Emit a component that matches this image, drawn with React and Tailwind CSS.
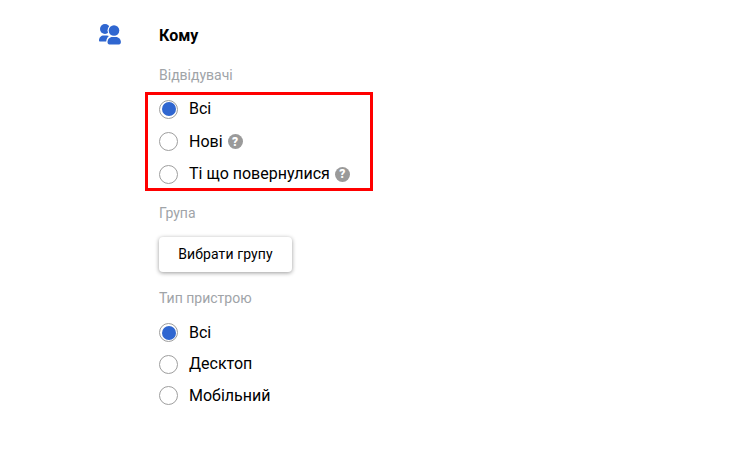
const visitors = [
  { label: "Всі", checked: true },
  { label: "Нові", help: true },
  { label: "Ті що повернулися", help: true },
];

const devices = [
  { label: "Всі", checked: true },
  { label: "Десктоп" },
  { label: "Мобільний" },
];

function HelpIcon() {
  return (
    <span className="ml-[5px] flex h-[15px] w-[15px] items-center justify-center rounded-full bg-[#9a9a9a] text-[12px] leading-none font-black text-white">
      ?
    </span>
  );
}

function Radio({ label, checked, help }) {
  return (
    <div className="flex h-[32px] items-center">
      <span className="flex h-[19px] w-[19px] items-center justify-center rounded-full border border-[#9e9e9e] bg-white">
        {checked && <span className="h-[14px] w-[14px] rounded-full bg-[#2f66d0]" />}
      </span>
      <span className="ml-[11px] text-[16px] text-black">{label}</span>
      {help && <HelpIcon />}
    </div>
  );
}

function UsersIcon() {
  return (
    <svg width="22" height="21" viewBox="0 0 22 21" fill="#2f66d0">
      <circle cx="6" cy="5" r="5" />
      <path d="M0 16.500C0 13.500 2 11.500 4.800 11.500h3c.8 0 1.500.2 2.100.5C8.500 13.300 7.500 15 7.200 17.500H1c-.6 0-1-.4-1-1z" />
      <circle cx="15" cy="6.500" r="6.500" fill="#fff" />
      <circle cx="15" cy="6.500" r="5.300" />
      <path d="M8.500 18.300c0-3 2-5.300 4.800-5.300h3.600c2.900 0 5 2.300 5 5.300 0 1.100-.8 2.200-1.900 2.200H10.300c-1.100 0-1.800-1.100-1.800-2.200z" />
    </svg>
  );
}

export default function App() {
  return (
    <div className="flex min-h-[464px] bg-white pt-[24px] pl-[99px] font-['Roboto',sans-serif]">
      <UsersIcon />

      <div className="ml-[38px] flex flex-col">
        <h2 className="pt-[1px] text-[16px] leading-[22px] font-bold text-black">Кому</h2>
        <p className="mt-[18px] text-[14px] leading-[20px] text-[#a0a4a8]">Відвідувачі</p>

        {/* Highlighted group */}
        <div className="mt-[7px] -ml-[14px] flex h-[99px] w-[228px] flex-col justify-between border-[3px] border-[#ff0000] pl-[11px] [&>div]:h-[28px]">
          {visitors.map((item) => (
            <Radio key={item.label} {...item} />
          ))}
        </div>

        <p className="mt-[12px] text-[14px] leading-[20px] text-[#a0a4a8]">Група</p>

        <button className="mt-[14px] h-[35px] w-[133px] rounded-[4px] bg-white text-[14px] tracking-[0.1px] text-black shadow-[0_1px_4px_rgba(0,0,0,0.4)]">
          Вибрати групу
        </button>

        <p className="mt-[16px] text-[14px] leading-[20px] text-[#a0a4a8]">Тип пристрою</p>

        <div className="mt-[9px] flex flex-col [&>div]:h-[31.5px]">
          {devices.map((item) => (
            <Radio key={item.label} {...item} />
          ))}
        </div>
      </div>
    </div>
  );
}
